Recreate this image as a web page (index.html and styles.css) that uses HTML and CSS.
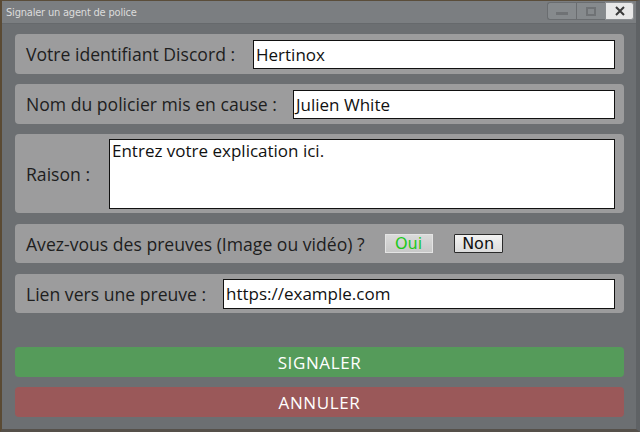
FILE: index.html
```html
<!DOCTYPE html>
<html lang="fr">
<head>
<meta charset="utf-8">
<link rel="stylesheet" href="styles.css">
</head>
<body>
<div class="window">
  <div class="titlebar">
    <span class="title">Signaler un agent de police</span>
    <div class="controls">
      <div class="ctl min"><span class="bar"></span></div>
      <div class="ctl max"><span class="box"></span></div>
      <div class="ctl close">
        <svg width="12" height="12" viewBox="0 0 12 12"><path d="M2 2L10 10M10 2L2 10" stroke="#3a3a3a" stroke-width="2"/></svg>
      </div>
    </div>
  </div>
  <div class="content">
    <div class="panel p1">
      <span class="label">Votre identifiant Discord :</span>
      <div class="field f1">Hertinox</div>
    </div>
    <div class="panel p2">
      <span class="label">Nom du policier mis en cause :</span>
      <div class="field f2">Julien White</div>
    </div>
    <div class="panel p3">
      <span class="label">Raison :</span>
      <div class="area">Entrez votre explication ici.</div>
    </div>
    <div class="panel p4">
      <span class="label">Avez-vous des preuves (Image ou vidéo) ?</span>
      <div class="btn oui">Oui</div>
      <div class="btn non">Non</div>
    </div>
    <div class="panel p5">
      <span class="label">Lien vers une preuve :</span>
      <div class="field f5">https://example.com</div>
    </div>
    <div class="action signal">SIGNALER</div>
    <div class="action cancel">ANNULER</div>
  </div>
</div>
</body>
</html>
```
FILE: styles.css
```css
html, body {
  margin: 0;
  padding: 0;
  width: 640px;
  height: 432px;
  overflow: hidden;
  background: #6c6f72;
}
.window {
  box-sizing: border-box;
  width: 640px;
  height: 432px;
  background: #6c6f72;
  border-top: 1px solid #5a4d3a;
  border-left: 2px solid #5a4a34;
  border-right: 4px solid #5f6265;
  border-bottom: 3px solid #55504a;
  display: flex;
  flex-direction: column;
}
.titlebar {
  height: 23px;
  background: #7b7e81;
  display: flex;
  align-items: center;
  justify-content: space-between;
  flex-shrink: 0;
  border-bottom: 1px solid #66696c;
  box-sizing: border-box;
}
.title {
  font-family: "DejaVu Sans Condensed", "DejaVu Sans", sans-serif;
  font-stretch: condensed;
  font-size: 11px;
  color: #dcdcdc;
  padding-left: 4px;
  letter-spacing: -0.2px;
}
.controls {
  display: flex;
  margin-right: 2px;
  margin-top: -2px;
}
.ctl {
  width: 29px;
  height: 18px;
  box-sizing: border-box;
  display: flex;
  align-items: center;
  justify-content: center;
  border: 1px solid #6a6d70;
  background: #868a8d;
}
.ctl.min { border-radius: 3px 0 0 3px; border-right: none; }
.ctl.max { border-right: none; }
.ctl.close { background: #e8e8e8; border-radius: 0 3px 3px 0; border-color: #8a8d90; }
.bar { width: 12px; height: 3px; background: #6f7275; margin-top: 5px; }
.box { border: 2px solid #6f7275; width: 6px; height: 5px; }
.content {
  flex: 1;
  display: flex;
  flex-direction: column;
  padding: 10px 12px 0 13px;
}
.panel {
  background: #9c9c9d;
  border-radius: 4px;
  display: flex;
  align-items: center;
  box-sizing: border-box;
  padding: 0 9px 0 11px;
  flex-shrink: 0;
}
.p1, .p2 { height: 40px; }
.p2 { margin-top: 10px; }
.p3 { height: 79px; margin-top: 10px; }
.p4 { height: 39px; margin-top: 11px; }
.p5 { height: 39px; margin-top: 11px; }
.label {
  font-family: "Open Sans", sans-serif;
  font-size: 17.6px;
  color: #1e1e1e;
  white-space: nowrap;
}
.field {
  margin-left: auto;
  height: 29px;
  box-sizing: border-box;
  border: 1px solid #111;
  background: #fff;
  font-family: "Open Sans", sans-serif;
  font-size: 17px;
  color: #111;
  padding-left: 2px;
  display: flex;
  align-items: center;
}
.f1 { width: 362px; }
.f2 { width: 322px; }
.f5 { width: 392px; height: 30px; }
.area {
  margin-left: auto;
  width: 506px;
  height: 70px;
  box-sizing: border-box;
  border: 1px solid #111;
  background: #fff;
  font-family: "Open Sans", sans-serif;
  font-size: 17px;
  color: #111;
  padding: 0 2px;
  line-height: 22px;
  align-self: center;
}
.btn {
  height: 19px;
  box-sizing: border-box;
  font-family: "DejaVu Sans", sans-serif;
  font-size: 16px;
  display: flex;
  align-items: center;
  justify-content: center;
}
.oui {
  margin-left: 20px;
  width: 48px;
  background: linear-gradient(#dadada, #c8c8c8);
  color: #1ec81e;
  border: 1px solid #e4e4e4;
}
.non {
  margin-left: 21px;
  width: 49px;
  background: linear-gradient(#f2f2f2, #dcdcdc);
  color: #111;
  border: 1px solid #2a2a2a;
  border-radius: 1px;
}
.action {
  height: 30px;
  border-radius: 4px;
  display: flex;
  align-items: center;
  justify-content: center;
  font-family: "Open Sans", sans-serif;
  font-size: 17px;
  letter-spacing: 0.6px;
  color: #fff;
  flex-shrink: 0;
}
.signal { background: #559b5a; margin-top: 34px; }
.cancel { background: #9a5859; margin-top: 10px; }
```
